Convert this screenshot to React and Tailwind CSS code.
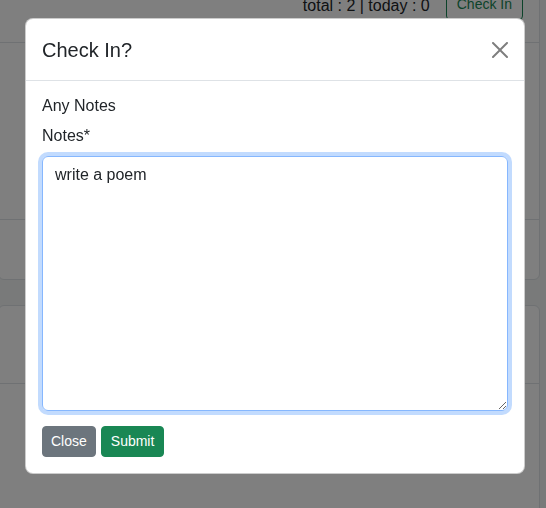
import React from 'react';

const CloseIcon = () => (
  <svg viewBox="0 0 16 16" className="w-4 h-4 opacity-50" fill="#000">
    <path d="M.293.293a1 1 0 0 1 1.414 0L8 6.586 14.293.293a1 1 0 1 1 1.414 1.414L9.414 8l6.293 6.293a1 1 0 0 1-1.414 1.414L8 9.414l-6.293 6.293a1 1 0 0 1-1.414-1.414L6.586 8 .293 1.707a1 1 0 0 1 0-1.414" />
  </svg>
);

const App = () => {
  return (
    <div className="relative h-[508px] overflow-hidden bg-[#f2f5f4] text-[#212529] font-['Liberation_Sans',Arial,sans-serif]">
      {/* page behind the modal */}
      <div className="-mt-[25px] -ml-[2px] mr-[6px]">
        <div className="bg-white border border-[#dee2e6] rounded-md">
          <div className="flex justify-end items-center gap-4 px-4 pt-[13px] pb-[22px] border-b border-[#dee2e6]">
            <span className="text-[16px] leading-6 mt-[2px]">total : 2 | today : 0</span>
            <button className="h-[31px] px-[10px] border border-[#198754] rounded text-[#198754] text-[14px] leading-[21px]">
              Check In
            </button>
          </div>
          <div className="h-[177px] border-b border-[#dee2e6]"></div>
          <div className="h-[59px]"></div>
        </div>
        <div className="mt-[25px] bg-white border border-[#dee2e6] rounded-md">
          <div className="h-[78px] border-b border-[#dee2e6]"></div>
          <div className="h-[160px]"></div>
        </div>
      </div>

      {/* backdrop */}
      <div className="fixed inset-0 bg-black/50"></div>

      {/* modal */}
      <div className="fixed inset-0">
        <div className="mt-[18px] ml-[25px] w-[500px] bg-white border border-black/20 rounded-lg">
          <div className="flex items-center justify-between px-4 pt-4 pb-[15px] border-b border-[#dee2e6]">
            <h5 className="text-[20px] leading-[30px] font-medium">Check In?</h5>
            <button className="p-1 mr-[-4px]">
              <CloseIcon />
            </button>
          </div>
          <div className="px-4 pt-[13px] pb-4">
            <div className="text-[16px] leading-6 font-medium">Any Notes</div>
            <label className="block mt-[6px] mb-2 text-[16px] leading-6">Notes*</label>
            <textarea
              defaultValue="write a poem"
              className="block w-full h-[255px] px-3 py-1.5 text-[16px] leading-6 border border-[#86b7fe] rounded-md shadow-[0_0_0_4px_rgba(13,110,253,0.25)] outline-none resize-y"
            />
            <div className="flex gap-[5px] mt-[15px]">
              <button className="px-2 py-1 text-[14px] leading-[21px] text-white bg-[#6c757d] rounded border border-[#6c757d]">
                Close
              </button>
              <button className="px-[9px] py-1 text-[14px] leading-[21px] text-white bg-[#198754] rounded border border-[#198754]">
                Submit
              </button>
            </div>
          </div>
        </div>
      </div>
    </div>
  );
};

export default App;
